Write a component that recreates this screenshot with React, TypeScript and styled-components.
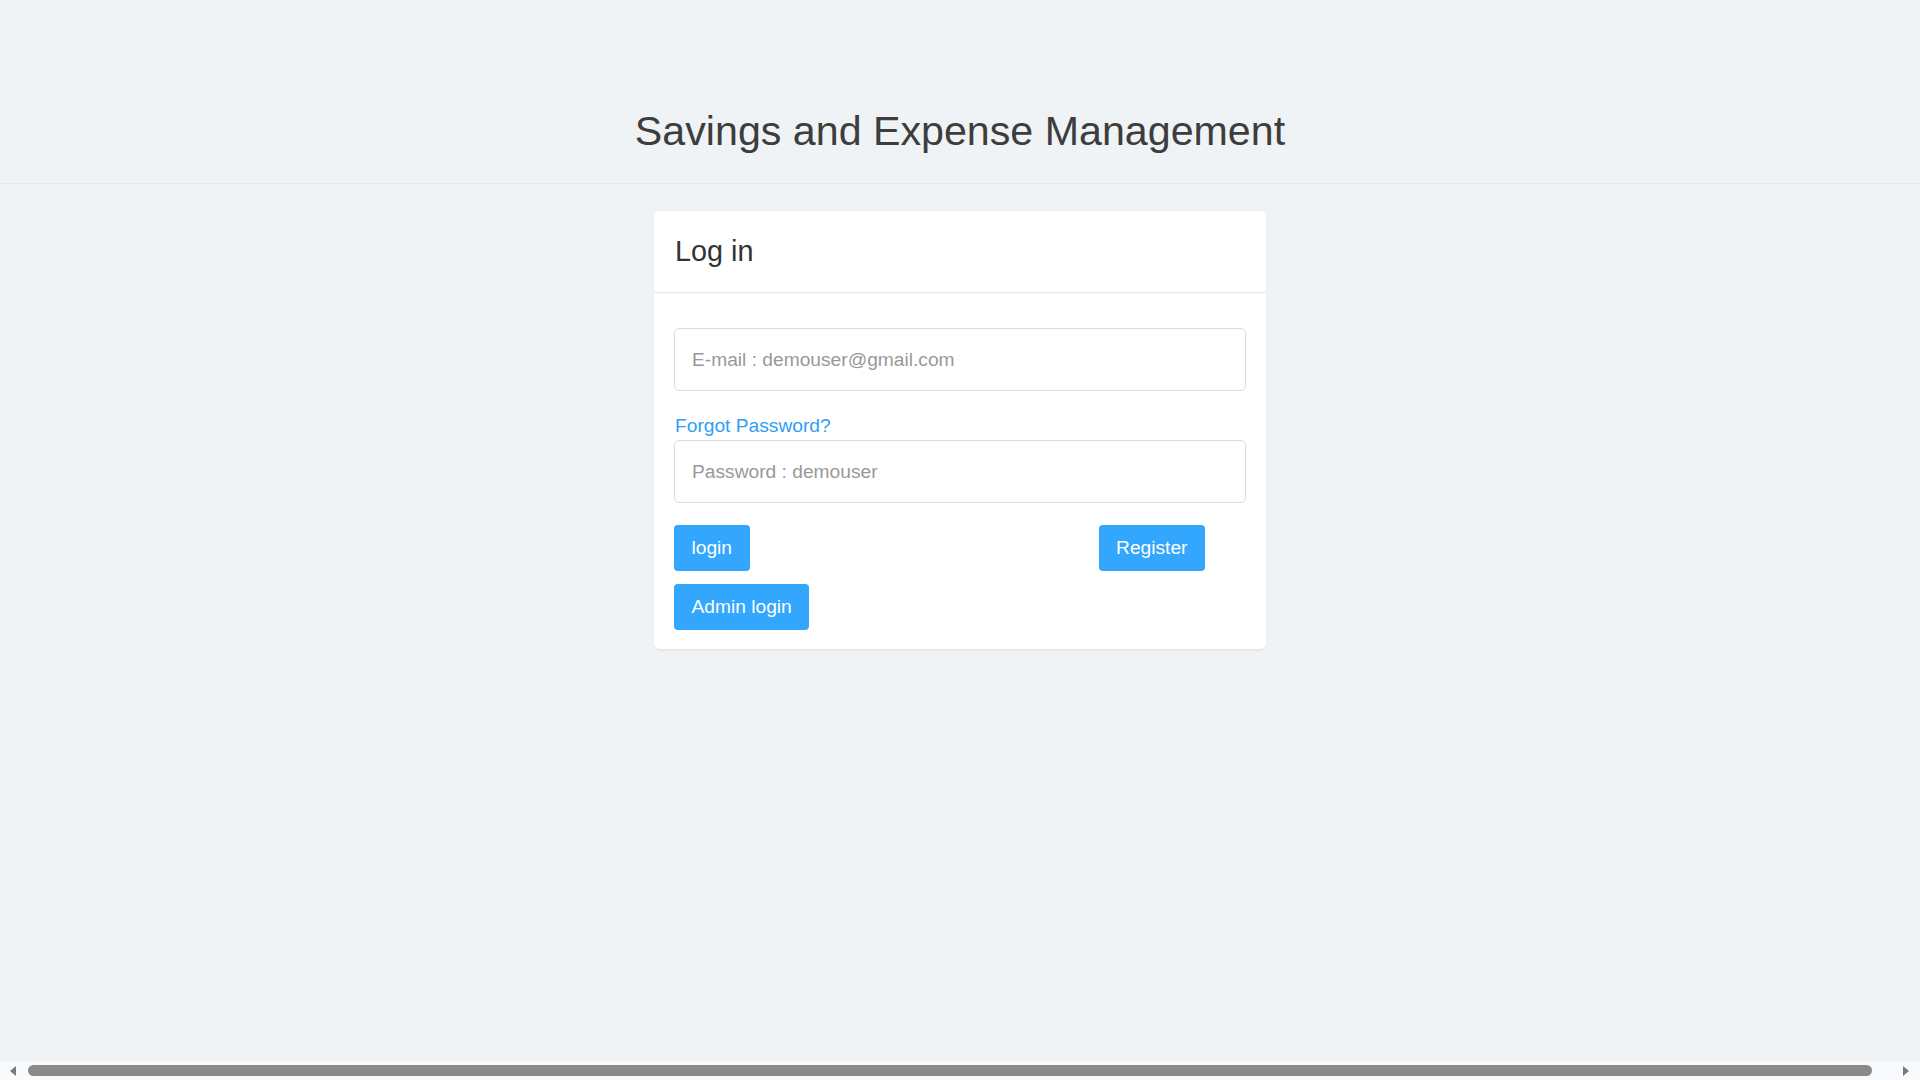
import React from 'react';
import styled, { createGlobalStyle } from 'styled-components';

const GlobalStyle = createGlobalStyle`
  html, body {
    margin: 0;
    padding: 0;
    background: #eff3f6;
  }
  body {
    font-family: 'Liberation Sans', Arial, sans-serif;
    color: #333;
  }
  * {
    box-sizing: border-box;
  }
`;

const App = () => {
  return (
    <>
      <GlobalStyle />
      <Page>
        <Header>
          <Title>Savings and Expense Management</Title>
        </Header>
        <Main>
          <Card>
            <CardHeader>
              <CardTitle>Log in</CardTitle>
            </CardHeader>
            <CardBody>
              <Input type='email' placeholder='E-mail : demouser@gmail.com' />
              <ForgotLink href='#'>Forgot Password?</ForgotLink>
              <Input type='password' placeholder='Password : demouser' />
              <ButtonRow>
                <Button>login</Button>
                <Button $push>Register</Button>
              </ButtonRow>
              <ButtonRow>
                <Button>Admin login</Button>
              </ButtonRow>
            </CardBody>
          </Card>
        </Main>
        <ScrollBar>
          <Arrow viewBox='0 0 6 10' width='6' height='10'>
            <path d='M6 0 L0 5 L6 10 Z' fill='#7a7a7a' />
          </Arrow>
          <Thumb />
          <Arrow viewBox='0 0 6 10' width='6' height='10'>
            <path d='M0 0 L6 5 L0 10 Z' fill='#7a7a7a' />
          </Arrow>
        </ScrollBar>
      </Page>
    </>
  );
};

export default App;

const Page = styled.div`
  display: flex;
  flex-direction: column;
  min-height: 100vh;
`;

const Header = styled.header`
  padding: 107px 0 27px;
  border-bottom: 1px solid #e5e9ed;
  text-align: center;
`;

const Title = styled.h1`
  margin: 0;
  font-size: 41.2px;
  line-height: 49px;
  font-weight: 400;
  color: #3d3d3d;
`;

const Main = styled.main`
  flex: 1;
  display: flex;
  justify-content: center;
  align-items: flex-start;
  padding-top: 27px;
`;

const Card = styled.div`
  width: 612px;
  background: #fff;
  border-radius: 5px;
  box-shadow: 0 1px 2px rgba(0, 0, 0, 0.08);
`;

const CardHeader = styled.div`
  padding: 23px 20px 24px 21px;
  border-bottom: 1px solid #e6e6e6;
`;

const CardTitle = styled.h3`
  margin: 0;
  font-size: 28.8px;
  line-height: 34px;
  font-weight: 400;
  color: #333;
`;

const CardBody = styled.div`
  display: flex;
  flex-direction: column;
  padding: 35px 20px 19px;
`;

const Input = styled.input`
  width: 100%;
  height: 63px;
  padding: 0 17px;
  border: 1px solid #dcdcdc;
  border-radius: 5px;
  font-family: inherit;
  font-size: 19.2px;
  color: #555;
  outline: none;

  &::placeholder {
    color: #999;
  }
`;

const ForgotLink = styled.a`
  margin-top: 20px;
  padding-left: 1px;
  font-size: 19.2px;
  line-height: 29px;
  color: #2f9ef6;
  text-decoration: none;
  align-self: flex-start;
`;

const ButtonRow = styled.div`
  display: flex;
  margin-top: 22px;

  & + & {
    margin-top: 13px;
  }
`;

const Button = styled.button<{ $push?: boolean }>`
  height: 46px;
  padding: 0 17.5px;
  border: none;
  border-radius: 4px;
  background: #33a6fe;
  color: #fff;
  font-family: inherit;
  font-size: 19.2px;
  cursor: pointer;
  margin-left: ${(p) => (p.$push ? 'auto' : '0')};
  margin-right: ${(p) => (p.$push ? '41px' : '0')};
`;

// drawing of the browser's horizontal scrollbar seen in the screenshot
const ScrollBar = styled.div`
  display: flex;
  align-items: center;
  gap: 12px;
  height: 19px;
  padding: 0 11px 0 10px;
  background: #f9fafb;
`;

const Arrow = styled.svg`
  flex-shrink: 0;
`;

const Thumb = styled.div`
  flex: 1;
  height: 11px;
  border-radius: 6px;
  background: #8a8a8a;
  margin-right: 19px;
`;
